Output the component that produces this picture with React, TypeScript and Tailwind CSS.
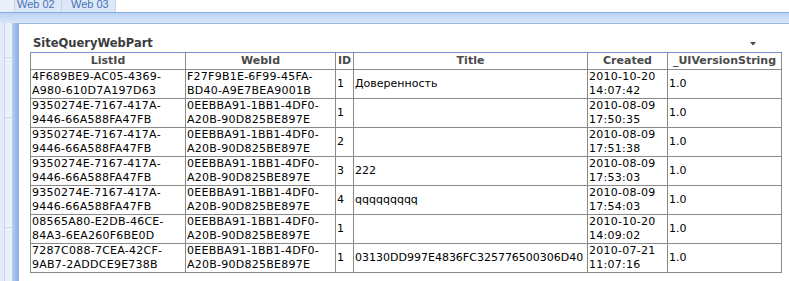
import React from "react";

interface Row {
  listId: [string, string];
  webId: [string, string];
  id: string;
  title: string;
  created: [string, string];
  version: string;
}

const WEB_A: [string, string] = ["0EEBBA91-1BB1-4DF0-", "A20B-90D825BE897E"];
const LIST_A: [string, string] = ["9350274E-7167-417A-", "9446-66A588FA47FB"];

const rows: Row[] = [
  {
    listId: ["4F689BE9-AC05-4369-", "A980-610D7A197D63"],
    webId: ["F27F9B1E-6F99-45FA-", "BD40-A9E7BEA9001B"],
    id: "1",
    title: "Доверенность",
    created: ["2010-10-20", "14:07:42"],
    version: "1.0",
  },
  { listId: LIST_A, webId: WEB_A, id: "1", title: "", created: ["2010-08-09", "17:50:35"], version: "1.0" },
  { listId: LIST_A, webId: WEB_A, id: "2", title: "", created: ["2010-08-09", "17:51:38"], version: "1.0" },
  { listId: LIST_A, webId: WEB_A, id: "3", title: "222", created: ["2010-08-09", "17:53:03"], version: "1.0" },
  { listId: LIST_A, webId: WEB_A, id: "4", title: "qqqqqqqqq", created: ["2010-08-09", "17:54:03"], version: "1.0" },
  {
    listId: ["08565A80-E2DB-46CE-", "84A3-6EA260F6BE0D"],
    webId: WEB_A,
    id: "1",
    title: "",
    created: ["2010-10-20", "14:09:02"],
    version: "1.0",
  },
  {
    listId: ["7287C088-7CEA-42CF-", "9AB7-2ADDCE9E738B"],
    webId: WEB_A,
    id: "1",
    title: "03130DD997E4836FC325776500306D40",
    created: ["2010-07-21", "11:07:16"],
    version: "1.0",
  },
];

const headers = ["ListId", "WebId", "ID", "Title", "Created", "_UIVersionString"];

function TwoLines({ lines }: { lines: [string, string] }) {
  return (
    <>
      {lines[0]}
      <br />
      {lines[1]}
    </>
  );
}

export default function App() {
  const td = "border border-[#8a8a8a] px-px py-0 align-middle whitespace-nowrap";
  const wide = "tracking-[0.25px]";

  return (
    <div className="w-[789px] h-[281px] overflow-hidden bg-white font-['DejaVu_Sans',Verdana,sans-serif]">
      {/* tab strip */}
      <div className="flex h-[12px] font-['Liberation_Sans',Arial,sans-serif] text-[11px] text-[#4673b5]">
        <div className="w-[14px] bg-[#e9f0fa]" />
        <div className="w-[48px] bg-[#dde8f7] border-l border-r border-[#c4d5ee] pl-[2px] overflow-hidden">
          <span className="block leading-[12px] -mt-[2px]">Web 02</span>
        </div>
        <div className="w-[54px] bg-[#dde8f7] border-r border-[#c4d5ee] pl-[9px] overflow-hidden">
          <span className="block leading-[12px] -mt-[2px]">Web 03</span>
        </div>
      </div>

      {/* blue band */}
      <div className="h-[11px] border-t border-[#86a9de] bg-gradient-to-b from-[#bcd3f3] to-[#d8e6f9]" />

      <div className="flex h-[258px]">
        {/* left rail */}
        <div className="flex w-[18px]">
          <div className="w-[5px] bg-[#e1ebf9] border-r border-[#c3d6f0]" />
          <div className="w-[7px] flex flex-col bg-[#eaf1fb]">
            <div className="h-[35px] border-b border-[#c9dbf2]" />
            <div className="h-[60px] border-b border-[#c9dbf2]" />
            <div className="h-[110px] border-b border-[#c9dbf2]" />
          </div>
          <div className="w-[6px] bg-gradient-to-r from-[#b9d1f2] to-[#89aee6]" />
        </div>

        {/* web part zone */}
        <div className="flex-1 border-l border-t border-[#98b6e2] pl-[11px] pt-[10px]">
          <div className="flex w-[751px] h-[18px] items-center justify-between pl-[3px]">
            <span className="text-[11.5px] leading-[18px] font-bold text-[#3c3c3c]">SiteQueryWebPart</span>
            <svg width="6" height="4" viewBox="0 0 6 4" className="mr-[25px] mt-[1px]">
              <path d="M0 0h6L3 3.5z" fill="#4a4a4a" />
            </svg>
          </div>

          <table className="table-fixed border-collapse w-[751px] text-[11px] leading-[14px] text-black">
            <colgroup>
              <col className="w-[155px]" />
              <col className="w-[150px]" />
              <col className="w-[18px]" />
              <col className="w-[234px]" />
              <col className="w-[80px]" />
              <col className="w-[114px]" />
            </colgroup>
            <thead>
              <tr>
                {headers.map((h) => (
                  <th
                    key={h}
                    className="border border-[#8a8a8a] border-t-[#7196d0] px-0 py-0 leading-[16px] font-bold text-[#4a4a4a] text-center whitespace-nowrap"
                  >
                    {h}
                  </th>
                ))}
              </tr>
            </thead>
            <tbody>
              {rows.map((r, i) => (
                <tr key={i}>
                  <td className={`${td} ${wide}`}>
                    <TwoLines lines={r.listId} />
                  </td>
                  <td className={`${td} ${wide}`}>
                    <TwoLines lines={r.webId} />
                  </td>
                  <td className={td}>{r.id}</td>
                  <td className={`${td} overflow-visible`}>{r.title}</td>
                  <td className={`${td} ${wide}`}>
                    <TwoLines lines={r.created} />
                  </td>
                  <td className={td}>{r.version}</td>
                </tr>
              ))}
            </tbody>
          </table>
        </div>
      </div>
    </div>
  );
}
